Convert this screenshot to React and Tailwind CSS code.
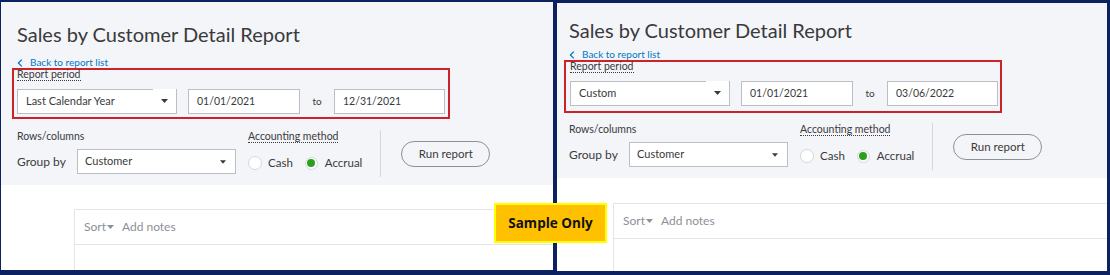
import React from "react";

function Arrow({ w = 7, h = 4, color = "#393a3d" }) {
  return (
    <svg width={w} height={h} viewBox="0 0 7 4" className="block">
      <path d="M0 0 L7 0 L3.5 4 Z" fill={color} />
    </svg>
  );
}

function Panel({ wrap, grayH, titlePt, titleCls, backCls, backMt, boxH, rowsMt, rowsCls, cardCls, from, to, period }) {
  return (
    <div className={wrap}>
      <div className={grayH}>
        <div className={titlePt}>
          <div className={titleCls}>Sales by Customer Detail Report</div>
        </div>
        <div className={backMt}>
          <div className={backCls}>
            <svg width="6" height="8" viewBox="0 0 6 8" className="block mr-[7px]">
              <path d="M4.8 0.6 L1.4 4 L4.8 7.4" fill="none" stroke="#0077c5" strokeWidth="1.3" />
            </svg>
            Back to report list
          </div>
        </div>
        <div className={boxH}>
          <div className="leading-[8px] text-[10.5px] text-[#393a3d] whitespace-nowrap">
            <span className="border-b border-dotted border-[#393a3d]">Report period</span>
          </div>
          <div className="mt-[11px] flex items-center">
            <div className="w-[160px] h-[25px] flex bg-white">
              <div className="flex-1 h-full border-l border-t border-b border-[#babec5] flex items-center pl-[8px] text-[11px] text-[#393a3d] whitespace-nowrap">
                {period}
              </div>
              <div className="w-[24px] h-full border-r border-b border-[#babec5] flex items-center justify-center">
                <Arrow w={7} h={4} color="#393a3d" />
              </div>
            </div>
            <div className="ml-[11px] w-[112px] h-[25px] bg-white border border-[#babec5] flex items-center pl-[8px] text-[10.5px] text-[#393a3d]">
              {from}
            </div>
            <div className="w-[34px] text-center text-[10px] text-[#393a3d]">to</div>
            <div className="w-[111px] h-[25px] bg-white border border-[#babec5] flex items-center pl-[8px] text-[10.5px] text-[#393a3d]">
              {to}
            </div>
          </div>
        </div>
        <div className={rowsMt}>
          <div className={rowsCls}>
            <div className="flex flex-col">
              <div className="text-[10.5px] leading-[12px] text-[#393a3d] whitespace-nowrap">Rows/columns</div>
              <div className="mt-[7px] flex items-center">
                <div className="w-[60px] text-[12px] text-[#393a3d] whitespace-nowrap">Group by</div>
                <div className="w-[159px] h-[25px] bg-white border border-[#babec5] flex items-center justify-between pl-[7px] pr-[9px] text-[11px] text-[#393a3d]">
                  <span>Customer</span>
                  <Arrow w={6} h={4} color="#393a3d" />
                </div>
              </div>
            </div>
            <div className="ml-[12px] flex flex-col">
              <div className="text-[10.5px] leading-[12px] text-[#393a3d] whitespace-nowrap">
                <span className="border-b border-dotted border-[#393a3d]">Accounting method</span>
              </div>
              <div className="mt-[7px] h-[25px] pt-[3px] flex items-center text-[11.5px] text-[#393a3d]">
                <div className="w-[14px] h-[14px] rounded-full bg-white border border-[#d4d7dc]"></div>
                <span className="ml-[6px]">Cash</span>
                <div className="ml-[12px] w-[13px] h-[13px] rounded-full bg-white border border-[#d4d7dc] flex items-center justify-center">
                  <div className="w-[8px] h-[8px] rounded-full bg-[#2ca01c]"></div>
                </div>
                <span className="ml-[7px]">Accrual</span>
              </div>
            </div>
            <div className="ml-[18px] w-[1px] h-[47px] bg-[#d4d7dc]"></div>
            <div className="ml-[20px] h-[47px] flex items-center">
              <div className="w-[89px] h-[26px] rounded-full border border-[#8d9096] flex items-center justify-center text-[11.5px] text-[#393a3d]">
                Run report
              </div>
            </div>
          </div>
        </div>
      </div>
      <div className={cardCls}>
        <div className="h-[35px] border-b border-[#e3e5e8] flex items-center pl-[9px] text-[12px] text-[#8d9096]">
          <span>Sort</span>
          <span className="ml-[1px]">
            <Arrow w={7} h={4} color="#8d9096" />
          </span>
          <span className="ml-[8px]">Add notes</span>
        </div>
      </div>
    </div>
  );
}

export default function App() {
  return (
    <div className="relative w-[1110px] h-[275px] bg-[#0c2260] flex items-start pl-[1px] gap-[4px] font-['Lato',sans-serif] overflow-hidden">
      <Panel
        wrap="mt-[2px] w-[552px] h-[268px] bg-white flex flex-col"
        grayH="h-[183px] bg-[#f4f5f8] flex flex-col"
        titlePt="pt-[20px]"
        titleCls="pl-[16px] text-[20px] leading-[24px] text-[#393a3d] whitespace-nowrap"
        backCls="pl-[16px] flex items-center h-[11px] text-[10px] leading-[11px] text-[#0077c5] whitespace-nowrap"
        backMt="mt-[11px]"
        boxH="mt-0 ml-[11px] w-[438px] h-[51px] border-2 border-[#cc2229] pl-[3px] flex flex-col"
        rowsMt="mt-[11px]"
        rowsCls="flex items-start pl-[16px]"
        cardCls="ml-[73px] mt-[24px] flex-1 border-t border-l border-[#e3e5e8]"
        period="Last Calendar Year"
        from="01/01/2021"
        to="12/31/2021"
      />
      <Panel
        wrap="mt-[3px] w-[550px] h-[268px] bg-white flex flex-col"
        grayH="h-[175px] bg-[#f4f5f8] flex flex-col"
        titlePt="pt-[15px]"
        titleCls="pl-[12px] text-[20px] leading-[24px] text-[#393a3d] whitespace-nowrap"
        backCls="pl-[12px] flex items-center h-[11px] text-[10px] leading-[11px] text-[#0077c5] whitespace-nowrap"
        backMt="mt-[7px]"
        boxH="mt-0 ml-[7px] w-[438px] h-[53px] border-2 border-[#cc2229] pl-[4px] flex flex-col"
        rowsMt="mt-[10px]"
        rowsCls="flex items-start pl-[12px]"
        cardCls="ml-[56px] mt-[25px] flex-1 border-t border-l border-[#e3e5e8]"
        period="Custom"
        from="01/01/2021"
        to="03/06/2022"
      />
      <div className="absolute left-[494px] top-[203px] w-[113px] h-[40px] border-2 border-[#ffff00] bg-[#ffc000] flex items-center justify-center text-[13.5px] font-bold text-[#111] font-['Open_Sans',sans-serif]">
        Sample Only
      </div>
    </div>
  );
}
